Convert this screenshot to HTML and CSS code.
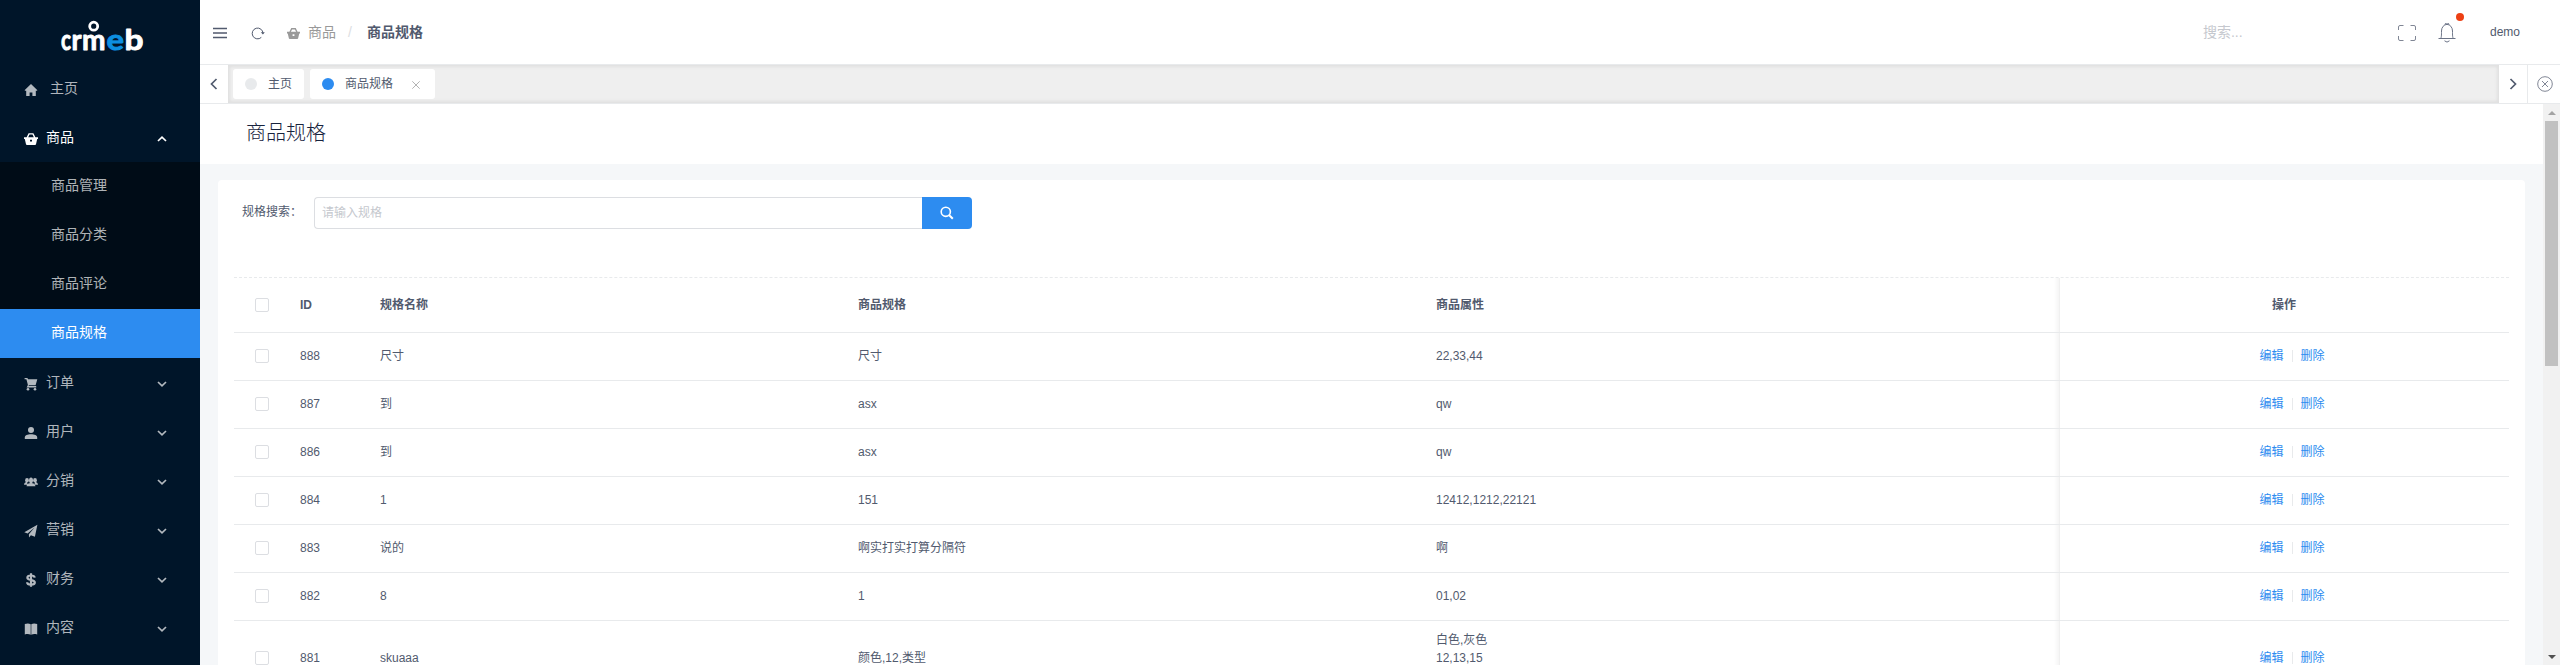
FILE: index.html
```html
<!DOCTYPE html>
<html lang="zh-CN">
<head>
<meta charset="utf-8">
<title>商品规格</title>
<link rel="stylesheet" href="styles.css">
</head>
<body>
<svg width="0" height="0" class="defs">
  <symbol id="down" viewBox="0 0 10 6"><path d="M1 1l4 3.800L9 1" fill="none" stroke="currentColor" stroke-width="1.700"/></symbol>
  <symbol id="basket" viewBox="0 0 14 14"><path d="M4.600 1.200h4.800l2 4H14v1.800h-.8L12 12.200c-.1.600-.4.800-1 .8H3c-.6 0-.9-.2-1-.8L.8 7H0V5.200h2.600zM5.500 2.600L4.200 5.200h5.600L8.500 2.600z M6 7.800v1.800h2V7.800z" fill="currentColor" fill-rule="evenodd"/></symbol>
</svg>
<div class="app">
  <aside class="side">
    <div class="logo"><svg class="word" viewBox="0 0 84 32"><text x="0" y="29.500" textLength="10" lengthAdjust="spacingAndGlyphs">c</text><text x="10.500" y="29.500" textLength="10" lengthAdjust="spacingAndGlyphs">r</text><text x="21" y="29.500" textLength="23.500" lengthAdjust="spacingAndGlyphs">m</text><text class="e" x="45.500" y="29.500" textLength="17.500" lengthAdjust="spacingAndGlyphs">e</text><text x="63.500" y="29.500" textLength="19" lengthAdjust="spacingAndGlyphs">b</text><circle cx="32.700" cy="6.200" r="4" fill="none" stroke="#fff" stroke-width="2.800"/></svg></div>
    <nav>
      <div class="item home"><svg class="ic" viewBox="0 0 14 14"><path d="M7 1L.8 7v.8h1.400V13h3.400V9.500h2.800V13h3.400V7.800h1.400V7z" fill="currentColor"/></svg><span>主页</span></div>
      <div class="item open"><svg class="ic"><use href="#basket"/></svg><span>商品</span><svg class="chev up"><use href="#down"/></svg></div>
      <div class="sub">
        <div class="subitem">商品管理</div>
        <div class="subitem">商品分类</div>
        <div class="subitem">商品评论</div>
        <div class="subitem active">商品规格</div>
      </div>
      <div class="item"><svg class="ic" viewBox="0 0 14 14"><path d="M.6 1h2.800l.7 1.300h9.200L11.600 8.200H5l-.5.900h7.700v1.300H2.600L3.900 8 2.400 2.300H.6z" fill="currentColor"/><circle cx="4" cy="12.200" r="1.300" fill="currentColor"/><circle cx="11" cy="12.200" r="1.300" fill="currentColor"/></svg><span>订单</span><svg class="chev"><use href="#down"/></svg></div>
      <div class="item"><svg class="ic" viewBox="0 0 14 14"><circle cx="7" cy="4" r="3" fill="currentColor"/><path d="M.8 13v-1.600C.8 9.400 3.500 8.300 7 8.300s6.200 1.100 6.200 3.100V13z" fill="currentColor"/></svg><span>用户</span><svg class="chev"><use href="#down"/></svg></div>
      <div class="item"><svg class="ic" viewBox="0 0 14 14"><g fill="currentColor"><ellipse cx="3" cy="5.300" rx="1.900" ry="2.300"/><ellipse cx="11" cy="5.300" rx="1.900" ry="2.300"/><ellipse cx="7" cy="5.300" rx="2" ry="2.900"/><path d="M0 9.800C0 8 1.200 7.400 3 7l.6 2.800zM14 9.800C14 8 12.800 7.400 11 7l-.6 2.800zM2.600 11.300C2.600 9 4.500 8 7 8s4.400 1 4.400 3.300z"/></g></svg><span>分销</span><svg class="chev"><use href="#down"/></svg></div>
      <div class="item"><svg class="ic" viewBox="0 0 14 14"><path d="M13.400.7L.3 8.300l3.300 1.300 7-6-5.700 6.600.1 3.300 1.900-2.300 4 1.600z" fill="currentColor"/></svg><span>营销</span><svg class="chev"><use href="#down"/></svg></div>
      <div class="item"><svg class="ic" viewBox="0 0 14 14"><path d="M10.700 4.700C10.500 3.200 9.300 2.500 7 2.500S3.400 3.300 3.400 4.700C3.400 6.200 5 6.600 7 7s3.800.9 3.800 2.500c0 1.400-1.300 2.200-3.800 2.200s-3.800-1-3.900-2.500M7 .3v13.400" fill="none" stroke="currentColor" stroke-width="2.200"/></svg><span>财务</span><svg class="chev"><use href="#down"/></svg></div>
      <div class="item"><svg class="ic" viewBox="0 0 14 14"><path d="M.8 2C3 1.200 5 1.200 6.700 2.200v10.600C5 11.900 3 11.900.8 12.500zM13.200 2C11 1.200 9 1.200 7.300 2.200v10.600c1.700-.9 3.700-.9 5.900-.3z" fill="currentColor"/></svg><span>内容</span><svg class="chev"><use href="#down"/></svg></div>
    </nav>
  </aside>
  <main class="main">
    <header class="top">
      <svg class="burger" viewBox="0 0 14 12"><path d="M0 1.500h14M0 6h14M0 10.500h14" stroke="#515a6e" stroke-width="1.300"/></svg>
      <svg class="reload" viewBox="0 0 14 14"><path d="M10.300 11.400A5.400 5.400 0 1 1 12 7.400" fill="none" stroke="#515a6e"/><path d="M9.800 6.200h4L11.900 8.600z" fill="#515a6e"/></svg>
      <svg class="bic"><use href="#basket"/></svg>
      <span class="crumb">商品</span><span class="slash">/</span><b class="crumb-now">商品规格</b>
      <span class="find">搜索...</span>
      <svg class="full" viewBox="0 0 18 16"><path d="M.5 5V2q0-1.500 1.500-1.500h3.500M12.500.5H16q1.500 0 1.500 1.500v3M17.500 11v3q0 1.500-1.500 1.500h-3.500M5.500 15.500H2Q.5 15.500.5 14v-3" fill="none" stroke="#808695"/></svg>
      <span class="bellbox"><svg class="bell" viewBox="0 0 18 20"><path d="M.5 15.500h17M2.700 15.500c.8-1.500.8-3 .8-7.500a5.500 6.600 0 0 1 11 0c0 4.500 0 6 .8 7.500M7 1.500a2 1.500 0 0 1 4 0M6.500 17.800q2.500 2.600 5 0" fill="none" stroke="#6b7386"/></svg><i class="dot"></i></span>
      <span class="user">demo</span>
    </header>
    <div class="tabs">
      <div class="tbtn left"><svg viewBox="0 0 8 12"><path d="M6.500 1L1.500 6l5 5" fill="none" stroke="#515a6e" stroke-width="1.700"/></svg></div>
      <div class="strip">
        <div class="tab"><i></i><span>主页</span></div>
        <div class="tab on"><i></i><span>商品规格</span><svg viewBox="0 0 8 8"><path d="M.3.300l7.400 7.400M7.700.300L.3 7.700" stroke="#aaa" stroke-width=".9"/></svg></div>
      </div>
      <div class="tbtn right"><svg viewBox="0 0 8 12"><path d="M1.500 1l5 5-5 5" fill="none" stroke="#515a6e" stroke-width="1.700"/></svg></div>
      <div class="tbtn close"><svg viewBox="0 0 16 16"><circle cx="8" cy="8" r="7.300" fill="none" stroke="#808695"/><path d="M5 5l6 6M11 5l-6 6" stroke="#808695"/></svg></div>
    </div>
    <div class="body">
      <div class="content">
        <h1 class="title">商品规格</h1>
        <section class="card">
          <div class="search">
            <label>规格搜索：</label>
            <div class="input">请输入规格</div>
            <div class="go"><svg viewBox="0 0 14 14"><circle cx="5.800" cy="5.800" r="4.600" fill="none" stroke="#fff" stroke-width="1.600"/><path d="M9 9l3.800 3.800" stroke="#fff" stroke-width="2"/></svg></div>
          </div>
          <div class="table">
            <div class="row head-row"><span class="ck"><i></i></span><span>ID</span><span>规格名称</span><span>商品规格</span><span>商品属性</span><span class="op">操作</span></div>
            <div class="row"><span class="ck"><i></i></span><span>888</span><span>尺寸</span><span>尺寸</span><span>22,33,44</span><span class="op"><a>编辑</a><a>删除</a></span></div>
            <div class="row"><span class="ck"><i></i></span><span>887</span><span>到</span><span>asx</span><span>qw</span><span class="op"><a>编辑</a><a>删除</a></span></div>
            <div class="row"><span class="ck"><i></i></span><span>886</span><span>到</span><span>asx</span><span>qw</span><span class="op"><a>编辑</a><a>删除</a></span></div>
            <div class="row"><span class="ck"><i></i></span><span>884</span><span>1</span><span>151</span><span>12412,1212,22121</span><span class="op"><a>编辑</a><a>删除</a></span></div>
            <div class="row"><span class="ck"><i></i></span><span>883</span><span>说的</span><span>啊实打实打算分隔符</span><span>啊</span><span class="op"><a>编辑</a><a>删除</a></span></div>
            <div class="row"><span class="ck"><i></i></span><span>882</span><span>8</span><span>1</span><span>01,02</span><span class="op"><a>编辑</a><a>删除</a></span></div>
            <div class="row tall"><span class="ck"><i></i></span><span>881</span><span>skuaaa</span><span>颜色,12,类型</span><span>白色,灰色<br>12,13,15<br>&nbsp;</span><span class="op"><a>编辑</a><a>删除</a></span></div>
          </div>
        </section>
      </div>
      <div class="bar"><i class="arr"></i><i class="thumb"></i><i class="arr dn"></i></div>
    </div>
  </main>
</div>
</body>
</html>
```
FILE: styles.css
```css
* { box-sizing: border-box; }
html { height: 665px; overflow: hidden; }
body { margin: 0; height: 665px; overflow: hidden; font: 12px/18px "Liberation Sans", "Noto Sans CJK SC", sans-serif; color: #515a6e; }
.defs { position: absolute; }
svg { display: block; flex: none; }
i { display: block; flex: none; }
.app { display: flex; width: 2560px; height: 665px; overflow: hidden; }

.side { width: 200px; flex: none; background: #001529; color: rgba(255,255,255,.7); font-size: 14px; }
.logo { height: 64px; padding: 20px 0 0 61px; }
.word { width: 84px; height: 32px; font: 700 29px Lato, sans-serif; fill: #fff; overflow: visible; }
.word text { stroke: #fff; stroke-width: .9px; stroke-linejoin: round; }
.word .e { fill: #0d8fe0; stroke: #0d8fe0; }
.item { display: flex; align-items: center; height: 49px; padding: 0 33px 2px 24px; }
.item span { margin-left: 8px; }
.item.home span { margin-left: 12px; }
.item.open { color: #fff; }
.ic { width: 14px; height: 14px; margin-top: 4px; }
.chev { width: 10px; height: 6px; margin: 4px 0 0 auto; }
.chev.up { transform: rotate(180deg); }
.sub { background: #000c17; }
.subitem { height: 49px; line-height: 47px; padding-left: 51px; }
.subitem.active { background: #2d8cf0; color: #fff; }

.main { flex: 1; display: flex; flex-direction: column; min-width: 0; }
.top { display: flex; align-items: center; height: 65px; flex: none; border-bottom: 1px solid #e8eaec; padding-left: 13px; font-size: 14px; }
.burger { width: 14px; height: 12px; margin-top: 2px; }
.reload { width: 14px; height: 14px; margin: 2px 0 0 24px; }
.bic { width: 13px; height: 13px; margin: 2px 8px 0 22px; color: #999; }
.crumb { color: #999; }
.slash { color: #dcdee2; margin: 0 15px 0 12px; }
.crumb-now { font-weight: 700; }
.find { margin-left: auto; width: 195px; color: #c5c8ce; }
.full { width: 18px; height: 16px; margin-top: 2px; }
.bellbox { position: relative; margin-left: 22px; }
.bell { width: 18px; height: 20px; margin-top: 2px; }
.dot { position: absolute; left: 18px; top: -8px; width: 8px; height: 8px; border-radius: 50%; background: #ed4014; }
.user { font-size: 12px; margin: 0 40px 0 34px; }

.tabs { display: flex; height: 39px; flex: none; border-bottom: 1px solid #e8eaec; }
.tbtn { display: flex; align-items: center; justify-content: center; width: 28px; }
.tbtn svg { width: 8px; height: 12px; }
.tbtn.right { width: 29px; border-right: 1px solid #e8eaec; }
.tbtn.close { width: 32px; padding-left: 2px; }
.tbtn.close svg { width: 16px; height: 16px; }
.strip { flex: 1; display: flex; gap: 6px; padding: 4px 5px; background: #efefef; box-shadow: inset 0 0 3px 2px rgba(100,100,100,.1); }
.tab { display: flex; align-items: center; height: 30px; background: #fff; border-radius: 3px; padding: 0 12px; }
.tab i { width: 12px; height: 12px; border-radius: 50%; background: #e8eaec; margin-right: 11px; }
.tab.on i { background: #2d8cf0; }
.tab svg { width: 8px; height: 8px; margin: 2px 3px 0 19px; }

.body { flex: 1; display: flex; min-height: 0; }
.content { flex: 1; background: #f5f7f9; overflow: hidden; }
.title { margin: 0; height: 60px; padding-left: 46px; background: #fff; font-size: 20px; font-weight: 300; line-height: 59px; color: #17233d; }
.card { margin: 16px 18px 0; padding: 17px 16px 0; height: 600px; background: #fff; border-radius: 4px; }
.search { display: flex; height: 32px; padding-left: 8px; }
.search label { width: 72px; line-height: 30px; white-space: nowrap; }
.input { width: 608px; border: 1px solid #dcdee2; border-right: 0; border-radius: 4px 0 0 4px; padding-left: 7px; line-height: 30px; color: #c5c8ce; }
.go { display: flex; align-items: center; justify-content: center; width: 50px; background: #2d8cf0; border-radius: 0 4px 4px 0; }
.go svg { width: 14px; height: 14px; }
.table { margin-top: 48px; border-top: 1px dashed #e8eaec; }
.row { display: grid; grid-template-columns: 66px 80px 478px 578px 623px 450px; grid-template-rows: 100%; align-items: center; height: 48px; padding-bottom: 1px; border-bottom: 1px solid #e8eaec; }
.row.head-row { height: 55px; font-weight: 700; }
.row.tall { height: 75px; padding-bottom: 0; }
.ck i { width: 14px; height: 14px; margin-left: 21px; border: 1px solid #dcdee2; border-radius: 2px; }
.op { display: flex; align-items: center; justify-content: center; align-self: stretch; margin-bottom: -1px; padding-bottom: 1px; background: linear-gradient(#f0f0f0, #f0f0f0) left / 1px 100% no-repeat; position: relative; }
.op::before { content: ""; position: absolute; right: 100%; top: 0; bottom: 0; width: 5px; background: linear-gradient(to left, rgba(0,0,0,.04), transparent); }
.op a { color: #2d8cf0; line-height: 12px; }
.op a:first-child { margin-left: 16px; padding-right: 8px; border-right: 1px solid #e8eaec; }
.op a + a { padding-left: 8px; }
.bar { width: 17px; background: #f1f1f1; display: flex; flex-direction: column; align-items: center; }
.thumb { width: 13px; height: 245px; margin-top: 6px; background: #c1c1c1; }
.arr { margin-top: 7px; border: 4px solid transparent; border-top: 0; border-bottom-color: #a3a3a3; }
.arr.dn { margin: auto 0 6px; border: 4px solid transparent; border-bottom: 0; border-top-color: #505050; }
```
